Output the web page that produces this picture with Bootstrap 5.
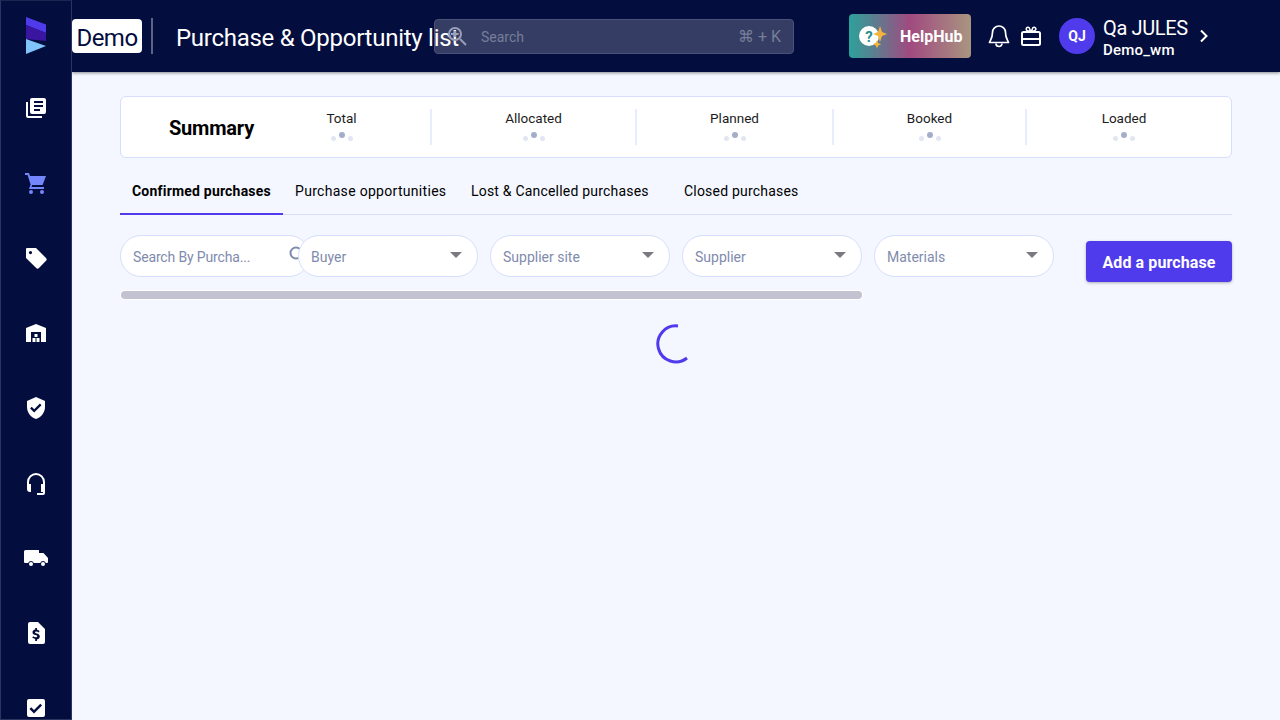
<!DOCTYPE html>
<html lang="en">
  <head>
    <meta charset="UTF-8" />
    <meta name="viewport" content="width=device-width, initial-scale=1.0" />
    <title>Purchase &amp; Opportunity list</title>
    <link href="https://cdn.jsdelivr.net/npm/bootstrap@5.3.0/dist/css/bootstrap.min.css" rel="stylesheet" />
    <style>
      html, body { height: 720px; overflow: hidden; }
      body { background: #f4f7ff; font-family: Roboto, "Liberation Sans", sans-serif; color: #000; }
      .app-side { width: 72px; height: 720px; background: #030d3e; border: 1px solid #2c3560; border-top-color: #1d2650; overflow: hidden; flex: none; z-index: 3; }
      .side-logo { height: 69px; flex: none; }
      .side-icon { height: 75px; flex: none; color: #fff; }
      .side-icon.on { color: #7486fb; }
      .side-icon svg { width: 24px; height: 24px; fill: currentColor; }
      .app-main { min-width: 0; }
      .app-top { height: 72px; background: #030d3e; color: #fff; box-shadow: 0 1px 3px rgba(0,0,0,.45); position: relative; z-index: 2; }
      .demo-tag { background: #fff; color: #030d3e; border-radius: 4px; font-size: 24px; line-height: 38px; width: 70px; height: 34px; text-align: center; letter-spacing: -.5px; }
      .top-sep { width: 2px; height: 36px; background: #5c6385; margin-left: 9px; margin-right: 23px; }
      .page-name { font-size: 24px; white-space: nowrap; width: 284px; letter-spacing: -.27px; padding-top: 4px; }
      .top-search { width: 360px; height: 35px; margin-left: -26px; background: rgba(255,255,255,.2); border: 1px solid #4a5178; border-radius: 4px; color: #787e99; font-size: 14px; padding-left: 12px; padding-right: 12px; padding-top: 3px; }
      .top-search svg { width: 20px; height: 20px; margin-right: 14px; margin-top: -3px; }
      .search-keys { font-size: 16px; margin-top: -2px; }
      .help-hub { width: 122px; height: 44px; margin-left: 55px; border-radius: 4px; background: linear-gradient(90deg, #2ba29a 0%, #a14a80 50%, #a99580 100%); font-size: 16px; font-weight: 700; padding-left: 9px; }
      .help-hub span { padding-top: 2px; }
      .help-hub svg { width: 32px; height: 32px; margin-right: 10px; flex: none; }
      .bell { margin-left: 17px; width: 22px; height: 24px; }
      .gift { margin-left: 10px; width: 22px; height: 22px; }
      .avatar-dot { width: 36px; height: 36px; margin-left: 17px; border-radius: 50%; background: #4f3bec; font-size: 14px; font-weight: 700; }
      .user-box { margin-left: 8px; line-height: 1; padding-top: 3px; }
      .user-name { font-size: 20px; letter-spacing: -.35px; }
      .user-org { font-size: 15px; margin-top: 5px; font-weight: 500; letter-spacing: .2px; }
      .chev { width: 12px; height: 16px; margin-left: 10px; }
      .app-body { padding: 24px 48px 0; }
      .sum-box { height: 62px; background: #fff; border: 1px solid #d6defc; border-radius: 6px; }
      .sum-title { width: 132px; padding-left: 48px; padding-top: 2px; font-size: 20px; font-weight: 700; white-space: nowrap; letter-spacing: -.2px; }
      .sum-cell { font-size: 13.5px; line-height: 17px; color: #1c1c22; border-right: 2px solid #e8ecfc; height: 36px; padding-top: 1px; }
      .sum-cell:last-child { border-right: 0; }
      .w-a { width: 179px; } .w-b { width: 205px; } .w-c { width: 197px; } .w-d { width: 193px; } .w-e { width: 194px; }
      .dots { height: 10px; gap: 3px; margin-top: 5px; }
      .dots i { display: block; width: 5px; height: 5px; border-radius: 50%; background: #e2e6f2; margin-top: 4px; }
      .dots i.mid { width: 6px; height: 6px; background: #a4aecb; margin-top: 0; }
      .tab-row { height: 45px; margin-top: 12px; border-bottom: 1px solid #d6defc; font-size: 14px; letter-spacing: .2px; }
      .tab-row span { display: block; padding-top: 11px; white-space: nowrap; }
      .tab-row .tab-on { width: 163px; height: 45px; padding-left: 12px; font-weight: 700; letter-spacing: .2px; border-bottom: 2px solid #4f3bec; }
      .tab-row .tab-2 { width: 188px; padding-left: 12px; letter-spacing: .3px; }
      .tab-3 { width: 213px; }
      .tool-row { margin-top: 20px; height: 47px; }
      .find-box, .pick-box { height: 42px; background: #fff; border: 1px solid #d6defc; border-radius: 21px; font-size: 14px; color: #7f8bad; padding-left: 12px; flex: none; }
      .find-box span, .pick-box span { padding-top: 2px; }
      .find-box { width: 190px; letter-spacing: -.15px; }
      .find-box svg { width: 16px; height: 16px; margin-left: 39px; margin-top: -4px; }
      .pick-box { width: 180px; padding-right: 15px; margin-right: 12px; }
      .pick-box.first { margin-left: -12px; position: relative; }
      .pick-box i { width: 0; height: 0; margin-top: -2px; border-left: 6px solid transparent; border-right: 6px solid transparent; border-top: 6px solid #7a7a80; }
      .add-btn { width: 146px; height: 41px; margin-left: 20px; margin-top: 6px; background: #4f3bec; border: 0; border-radius: 4px; color: #fff; font-size: 16px; font-weight: 700; box-shadow: 0 1px 3px rgba(0,0,0,.3); padding: 2px 0 0; letter-spacing: .1px; }
      .add-btn:hover { background: #4f3bec; color: #fff; }
      .scroll-track { width: 743px; height: 10px; margin-top: 8px; background: #fff; border-radius: 5px; padding: 1px; }
      .scroll-thumb { height: 8px; background: #c3c2d0; border-radius: 4px; }
      .spin-wrap { margin-top: 23px; padding-left: 535px; }
      .spin-wrap svg { width: 40px; height: 42px; display: block; }
    </style>
  </head>
  <body>
    <div class="d-flex">
      <div class="app-side d-flex flex-column">
        <div class="side-logo d-flex align-items-center justify-content-center">
          <svg width="24" height="38" viewBox="0 0 24 38">
            <polygon points="2,0 22,7.5 22,16 2,8" fill="#4f3bec" />
            <polygon points="2,8 22,16 22,24 2,22" fill="#3a16a0" />
            <polygon points="2,22 22,29 2,37" fill="#80c4fb" />
          </svg>
        </div>
        <div class="side-icon d-flex align-items-center justify-content-center">
          <svg viewBox="0 0 24 24"><path d="M2 6h2v14h14v2H4a2 2 0 0 1-2-2z" /><path fill-rule="evenodd" d="M8 2h12a2 2 0 0 1 2 2v12a2 2 0 0 1-2 2H8a2 2 0 0 1-2-2V4a2 2 0 0 1 2-2zm2 3v2h9V5zm0 4v2h9V9zm0 4v2h6v-2z" /></svg>
        </div>
        <div class="side-icon on d-flex align-items-center justify-content-center">
          <svg viewBox="0 0 24 24"><path d="M1 2h4l1 3h16l-3.4 9H8.2L7.5 16H20v2H5l1.6-4.4L3.6 4H1z" /><circle cx="7" cy="21" r="2" /><circle cx="18" cy="21" r="2" /></svg>
        </div>
        <div class="side-icon d-flex align-items-center justify-content-center">
          <svg viewBox="0 0 24 24"><path fill-rule="evenodd" d="M3 2h9l10 10a2 2 0 0 1 0 2.8L15 22a2 2 0 0 1-2.8 0L2 12V3a1 1 0 0 1 1-1zm3.500 3a1.600 1.600 0 1 0 0 3.200 1.600 1.600 0 0 0 0-3.200z" /></svg>
        </div>
        <div class="side-icon d-flex align-items-center justify-content-center">
          <svg viewBox="0 0 24 24"><path fill-rule="evenodd" d="M12 3l10 4v14h-5V11H7v10H2V7z" /><path d="M8.500 17h3v4h-3zM12.500 17h3v4h-3zM10.500 13h3v3h-3z" /></svg>
        </div>
        <div class="side-icon d-flex align-items-center justify-content-center">
          <svg viewBox="0 0 24 24"><path fill-rule="evenodd" d="M12 1l9 4v6c0 5.500-3.800 10.400-9 12-5.200-1.600-9-6.500-9-12V5zm-1.800 15.500l7.300-7.300-1.600-1.600-5.700 5.700-2.500-2.500-1.600 1.600z" /></svg>
        </div>
        <div class="side-icon d-flex align-items-center justify-content-center">
          <svg viewBox="0 0 24 24"><path d="M12 2a9 9 0 0 0-9 9v7a3 3 0 0 0 3 3h1v-8H5v-2a7 7 0 0 1 14 0v2h-2v8h2v1h-6v2h6a2 2 0 0 0 2-2V11a9 9 0 0 0-9-9z" /></svg>
        </div>
        <div class="side-icon d-flex align-items-center justify-content-center">
          <svg viewBox="0 0 24 24"><path fill-rule="evenodd" d="M0 5.500A1.500 1.500 0 0 1 1.500 4H15v3h4.500l4.500 5v4a1 1 0 0 1-1 1h-1.200a3 3 0 0 0-5.600 0H9.800a3 3 0 0 0-5.600 0H1a1 1 0 0 1-1-1z" /><circle cx="7" cy="18" r="2" /><circle cx="19" cy="18" r="2" /></svg>
        </div>
        <div class="side-icon d-flex align-items-center justify-content-center">
          <svg viewBox="0 0 24 24"><path fill-rule="evenodd" d="M6 1h8l7 7v13a2 2 0 0 1-2 2H6a2 2 0 0 1-2-2V3a2 2 0 0 1 2-2zm5.200 6v1.400c-1.600.3-2.700 1.300-2.700 2.800 0 1.800 1.500 2.500 3 2.900 1.200.3 1.700.6 1.700 1.100 0 .6-.6 1-1.600 1-1 0-1.800-.4-2.400-1l-1 1.400c.7.700 1.800 1.100 3 1.300V20h1.800v-1.600c1.700-.3 2.800-1.300 2.800-2.900 0-1.800-1.500-2.500-3.100-2.900-1.200-.3-1.600-.6-1.600-1.100s.5-.9 1.400-.9c.8 0 1.500.3 2.100.8l1-1.400c-.7-.6-1.500-1-2.600-1.200V7z" /></svg>
        </div>
        <div class="side-icon d-flex align-items-center justify-content-center">
          <svg viewBox="0 0 24 24"><path fill-rule="evenodd" d="M5 3h14a2 2 0 0 1 2 2v14a2 2 0 0 1-2 2H5a2 2 0 0 1-2-2V5a2 2 0 0 1 2-2zm5 14.500l8-8-1.700-1.700-6.300 6.300-2.800-2.800L5.500 13z" /></svg>
        </div>
      </div>

      <div class="app-main flex-grow-1">
        <div class="app-top d-flex align-items-center">
          <div class="demo-tag">Demo</div>
          <div class="top-sep"></div>
          <div class="page-name">Purchase &amp; Opportunity list</div>
          <div class="top-search d-flex align-items-center">
            <svg viewBox="0 0 20 20" fill="none" stroke="#9aa0b8" stroke-width="2"><circle cx="8" cy="8" r="6" /><path d="M13 13l6 6" /><path d="M8 5v6M5 8h6" /></svg>
            <span>Search</span>
            <span class="search-keys ms-auto">⌘ + K</span>
          </div>
          <div class="help-hub d-flex align-items-center">
            <svg viewBox="0 0 32 32">
              <circle cx="11" cy="16" r="10" fill="#fff" />
              <text x="11" y="21.500" text-anchor="middle" font-size="15" font-weight="700" fill="#2b8f90" font-family="Roboto, sans-serif">?</text>
              <path d="M22 6l2 6 5 2-5 2-2 6-2-6-5-2 5-2z" fill="#f5b53c" />
              <path d="M19 20l1.200 3 3 1.200-3 1.200-1.200 3-1.200-3-3-1.200 3-1.200z" fill="#f5b53c" />
            </svg>
            <span>HelpHub</span>
          </div>
          <svg class="bell" viewBox="0 0 22 24" fill="none" stroke="#fff" stroke-width="1.700"><path d="M11 2a6.500 6.500 0 0 0-6.500 6.500c0 6-2.500 8-3 10h19c-.5-2-3-4-3-10A6.500 6.500 0 0 0 11 2z" stroke-linejoin="round" /><path d="M8 19.500a3 3 0 0 0 6 0" /></svg>
          <svg class="gift" viewBox="0 0 22 22" fill="none" stroke="#fff" stroke-width="2"><rect x="2" y="7" width="18" height="13" rx="1.500" /><path d="M2 14h18" /><path d="M11 7L7 5.500A1.800 1.800 0 1 1 9 2.500zM11 7l4-1.500A1.800 1.800 0 1 0 13 2.500z" stroke-width="1.500" /></svg>
          <div class="avatar-dot d-flex align-items-center justify-content-center">QJ</div>
          <div class="user-box">
            <div class="user-name">Qa JULES</div>
            <div class="user-org">Demo_wm</div>
          </div>
          <svg class="chev" viewBox="0 0 12 16" fill="none" stroke="#fff" stroke-width="2"><path d="M3 2.500L8.500 8 3 13.500" /></svg>
        </div>

        <div class="app-body">
          <div class="sum-box d-flex align-items-center">
            <div class="sum-title">Summary</div>
            <div class="sum-cell w-a text-center">Total<div class="dots d-flex justify-content-center"><i></i><i class="mid"></i><i></i></div></div>
            <div class="sum-cell w-b text-center">Allocated<div class="dots d-flex justify-content-center"><i></i><i class="mid"></i><i></i></div></div>
            <div class="sum-cell w-c text-center">Planned<div class="dots d-flex justify-content-center"><i></i><i class="mid"></i><i></i></div></div>
            <div class="sum-cell w-d text-center">Booked<div class="dots d-flex justify-content-center"><i></i><i class="mid"></i><i></i></div></div>
            <div class="sum-cell w-e text-center">Loaded<div class="dots d-flex justify-content-center"><i></i><i class="mid"></i><i></i></div></div>
          </div>

          <div class="tab-row d-flex">
            <span class="tab-on">Confirmed purchases</span>
            <span class="tab-2">Purchase opportunities</span>
            <span class="tab-3">Lost &amp; Cancelled purchases</span>
            <span>Closed purchases</span>
          </div>

          <div class="tool-row d-flex">
            <div class="find-box d-flex align-items-center">
              <span>Search By Purcha...</span>
              <svg viewBox="0 0 16 16" fill="none" stroke="#7f8bad" stroke-width="2"><circle cx="7" cy="7" r="5.500" /></svg>
            </div>
            <div class="pick-box first d-flex align-items-center justify-content-between"><span>Buyer</span><i></i></div>
            <div class="pick-box d-flex align-items-center justify-content-between"><span>Supplier site</span><i></i></div>
            <div class="pick-box d-flex align-items-center justify-content-between"><span>Supplier</span><i></i></div>
            <div class="pick-box d-flex align-items-center justify-content-between"><span>Materials</span><i></i></div>
            <button class="btn add-btn" type="button">Add a purchase</button>
          </div>

          <div class="scroll-track"><div class="scroll-thumb"></div></div>

          <div class="spin-wrap">
            <svg viewBox="0 0 40 42" fill="none" stroke="#4f3bec" stroke-width="3"><path d="M23 3A18 18 0 1 0 32 35" /></svg>
          </div>
        </div>
      </div>
    </div>
  </body>
</html>
